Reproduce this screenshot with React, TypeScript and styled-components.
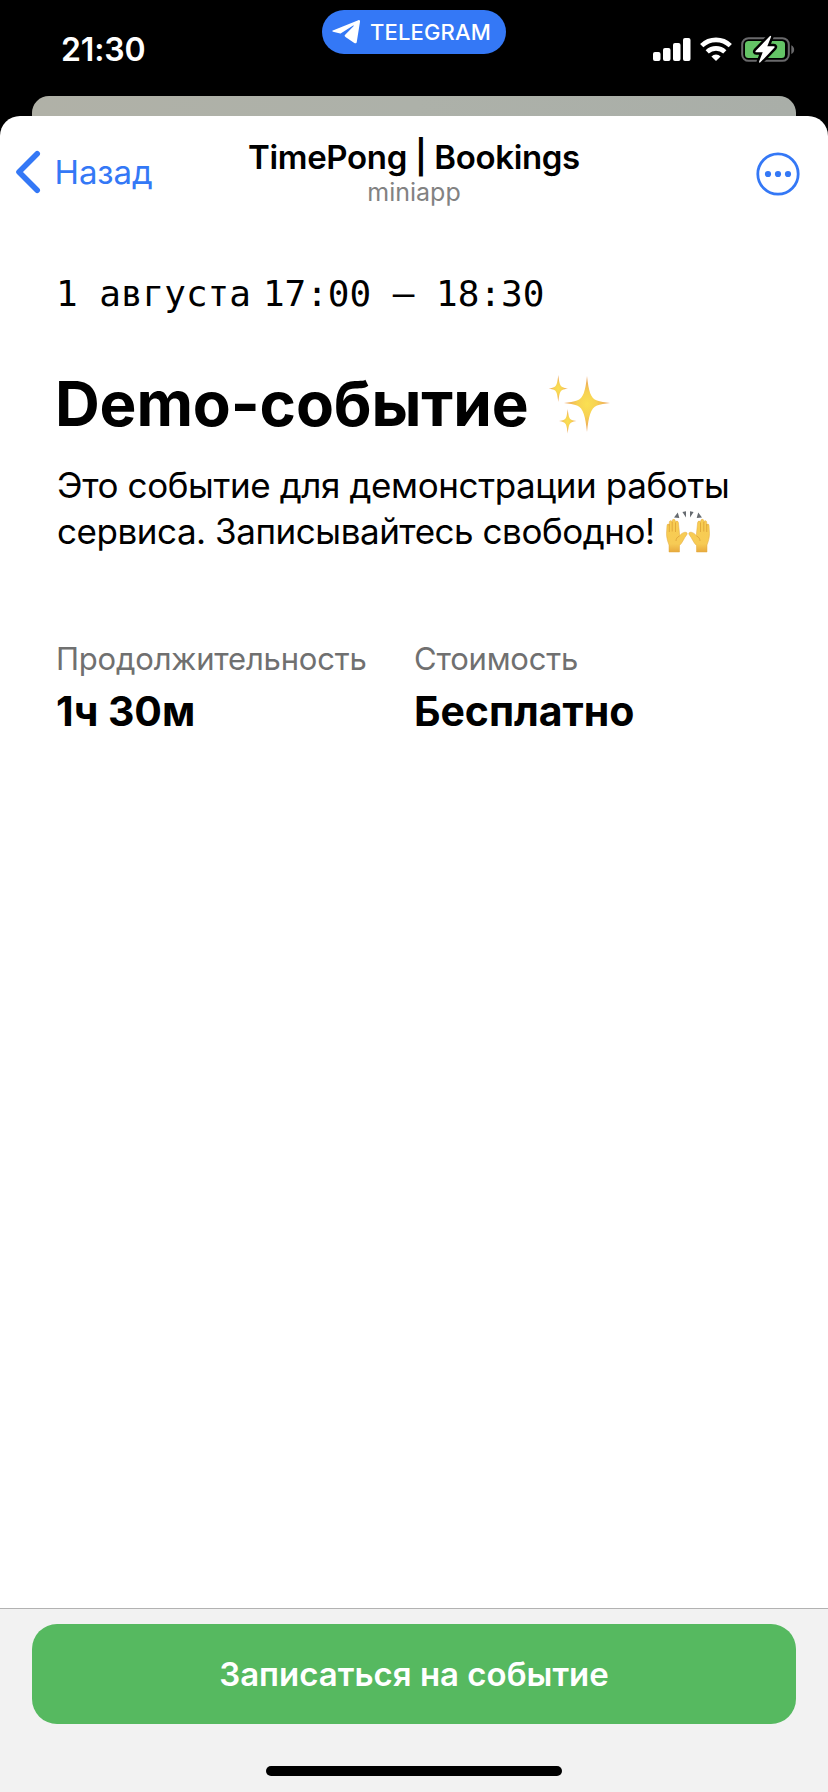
import React from "react";
import styled, { createGlobalStyle } from "styled-components";

const GlobalStyle = createGlobalStyle`
  * { box-sizing: border-box; }
  body {
    margin: 0;
    background: #000;
    color: #000;
    font-family: Inter, "Liberation Sans", sans-serif;
  }
`;

const BLUE = "#3478f6";

const Screen = styled.div`
  width: 828px;
  height: 1792px;
  display: flex;
  flex-direction: column;
  background: #000;
  overflow: hidden;
`;

const StatusBar = styled.header`
  height: 96px;
  flex: none;
  display: grid;
  grid-template-columns: 1fr 184px 1fr;
  align-items: start;
`;

const Clock = styled.time`
  padding: 30px 0 0 61px;
  color: #fff;
  font-size: 32px;
  line-height: 40px;
  font-weight: 600;
  letter-spacing: -0.15px;
`;

const AppPill = styled.div`
  margin-top: 10px;
  height: 44px;
  padding-left: 10px;
  display: flex;
  align-items: center;
  gap: 10px;
  border-radius: 22px;
  background: ${BLUE};
  color: #fff;
  font-size: 22px;
  line-height: 44px;
  font-weight: 500;
  letter-spacing: 0.15px;
`;

const StatusIcons = styled.div`
  display: flex;
  justify-content: flex-end;
  padding: 35px 32px 0 0;
`;

const BackSheet = styled.div`
  flex: none;
  height: 40px;
  margin: 0 32px -20px;
  border-radius: 17px 17px 0 0;
  background: linear-gradient(90deg, #b0b1a7, #adb1a9 50%, #a9aea8);
`;

const Sheet = styled.div`
  position: relative;
  flex: 1;
  display: flex;
  flex-direction: column;
  background: #fff;
  border-radius: 20px 20px 0 0;
  overflow: hidden;
`;

const NavBar = styled.nav`
  height: 112px;
  flex: none;
  display: grid;
  grid-template-columns: 1fr auto 1fr;
  align-items: center;
`;

const BackButton = styled.button`
  display: flex;
  align-items: center;
  justify-self: start;
  gap: 13.5px;
  padding: 0 0 0 15px;
  border: 0;
  background: none;
  color: ${BLUE};
  font: 400 33px/40px Inter, sans-serif;
  letter-spacing: -0.1px;
`;

const TitleBlock = styled.div`
  display: flex;
  flex-direction: column;
  align-items: center;
`;

const Title = styled.div`
  font-size: 33px;
  line-height: 40px;
  font-weight: 600;
  letter-spacing: -0.35px;
  white-space: nowrap;
`;

const Subtitle = styled.div`
  color: #828282;
  font-size: 25px;
  line-height: 30px;
`;

const MoreButton = styled.button`
  justify-self: end;
  display: flex;
  margin: 4px 28px 0 0;
  padding: 0;
  border: 0;
  background: none;
`;

const Content = styled.main`
  flex: 1;
  padding: 45px 56px 0;
`;

const DateRow = styled.div`
  display: flex;
  gap: 12px;
  font-family: "DejaVu Sans Mono", monospace;
  font-size: 36px;
  line-height: 42px;
  letter-spacing: -0.02px;
  white-space: pre;
`;

const Heading = styled.h1`
  display: flex;
  align-items: center;
  gap: 19px;
  margin: 51px 0 20px -1px;
  font-size: 62px;
  line-height: 76px;
  font-weight: 700;
  letter-spacing: -0.15px;
  white-space: nowrap;
`;

const Description = styled.p`
  margin: 0 0 86px 1px;
  font-size: 35px;
  line-height: 46px;
`;

const Line = styled.span<{ $tracking: number }>`
  display: block;
  letter-spacing: ${(p) => p.$tracking}px;
  white-space: nowrap;
`;

const Facts = styled.dl`
  display: grid;
  grid-template-columns: 358px 358px;
  margin: 0;
`;

const Label = styled.dt`
  color: #707070;
  font-size: 31px;
  line-height: 38px;
  letter-spacing: -0.2px;
`;

const Value = styled.dd`
  margin: 8px 0 0;
  font-size: 41px;
  line-height: 50px;
  font-weight: 700;
  letter-spacing: -0.05px;
`;

const Footer = styled.footer`
  height: 184px;
  flex: none;
  display: flex;
  flex-direction: column;
  align-items: center;
  padding: 15px 32px 0;
  border-top: 1px solid #b2b2b2;
  background: #f2f2f2;
`;

const PrimaryButton = styled.button`
  width: 100%;
  height: 100px;
  border: 0;
  border-radius: 25px;
  background: #56b960;
  color: #fff;
  font: 600 33px/40px Inter, sans-serif;
`;

const HomeIndicator = styled.div`
  width: 296px;
  height: 10px;
  margin-top: 42px;
  border-radius: 5px;
  background: #000;
`;

const HandsSvg = styled.svg`
  margin-left: 2px;
  vertical-align: -9px;
`;

const PlaneIcon = () => (
  <svg width="28" height="24" viewBox="0 0 28 24" fill="#fff">
    <path d="M.8 10.500 26.300.2c1.100-.4 1.900.2 1.700 1.500l-3.200 20c-.2 1.500-1.200 1.900-2.500 1.200l-8.800-5.800c-1.300-.9-1.100-1.600-.1-2.700l8.100-8.200c.7-.8.1-1.100-.7-.5L9.400 12.900c-.7.5-1.400.6-2.200.4L1 11.700c-1-.3-1-.8-.2-1.200Z" />
  </svg>
);

const SystemIcons = () => (
  <svg width="143" height="30" viewBox="0 0 143 30">
    <g fill="#fff">
      <rect x="0" y="17" width="7.5" height="9" rx="2" />
      <rect x="10" y="13" width="7.5" height="13" rx="2" />
      <rect x="20" y="8" width="7.5" height="18" rx="2" />
      <rect x="30" y="3" width="7.5" height="23" rx="2" />
      <path d="M63 26 58.4 21.4a6.7 6.7 0 0 1 9.2 0Z" />
    </g>
    <g fill="none" stroke="#fff" strokeWidth="4.6">
      <path d="M48.7 10.7a20.5 20.5 0 0 1 28.6 0" />
      <path d="M54.2 16.9a12.8 12.8 0 0 1 17.6 0" />
    </g>
    <rect x="89.2" y="3.2" width="46.6" height="22.6" rx="6.4" fill="none" stroke="#69696b" strokeWidth="2" />
    <path d="M138.3 10.2c3.8 1.8 3.8 7 0 8.8Z" fill="#69696b" />
    <rect x="92" y="6" width="40" height="17" rx="3.5" fill="#64c466" />
    <path d="M116.7 1.3 102.8 15.8q-1.1 1.4.6 1.5h6.3l-3.5 9c-.5 1.5.5 1.8 1.4.8l13.7-14.4q1.1-1.4-.6-1.5h-6.4l3.7-9.1c.5-1.4-.5-1.7-1.3-.8Z" fill="#fff" stroke="#000" strokeWidth="5" paintOrder="stroke" strokeLinejoin="round" />
  </svg>
);

const Sparkles = () => (
  <svg width="64" height="60" viewBox="0 0 64 60">
    <defs>
      <radialGradient id="spark">
        <stop offset="0" stopColor="#fae052" />
        <stop offset=".42" stopColor="#f7d253" />
        <stop offset=".75" stopColor="#efb256" />
        <stop offset="1" stopColor="#eca566" />
      </radialGradient>
    </defs>
    <g fill="url(#spark)">
      <path d="M39 2c1.700 15 3.600 22.500 10 24.600C52 27.800 57 28.500 62 29c-5 .6-10 1.300-13 2.600C42.500 34 40.700 43 39 58c-1.700-15-3.500-24-10-26.400C26 30.300 21 29.600 16 29c5-.5 10-1.200 13-2.400C35.400 24.500 37.300 17 39 2Z" />
      <path d="M10.300 1c.9 7.800 1.700 10.800 4 11.900 1.500.8 3.200 1.200 5.700 1.600-2.500.4-4.200.8-5.700 1.600-2.300 1.300-3.100 4.100-4 11.900-.9-7.800-1.700-10.600-4-11.900C4.800 15.300 3.100 14.900.6 14.500c2.500-.4 4.200-.8 5.700-1.600 2.300-1.100 3.100-4.100 4-11.900Z" />
      <path d="M19.700 35c.8 7.200 1.500 9.800 3.700 10.800 1.400.7 2.900 1 5 1.300-2.100.4-3.600.7-5 1.400-2.200 1.200-2.900 3.800-3.700 11-.8-7.200-1.500-9.800-3.700-11-1.400-.7-2.900-1-5-1.400 2.100-.3 3.600-.6 5-1.300 2.200-1 2.900-3.600 3.700-10.800Z" />
    </g>
  </svg>
);

const HAND =
  "M3 42V35C1.500 31 .5 27.500.5 23.500L1 15.500C1.200 13.600 3 13.600 3.200 15.500L3.300 12.200C3.500 10.200 5.800 10.200 6 12.200L6.200 10.700C6.400 8.900 9 8.900 9.200 10.700L9.600 12.200C10 10.500 12.200 10.800 12.400 12.700L13.700 25.500C15 24 16.800 22.500 19 22.200 21 22 21.800 23.500 20.600 24.900 18 28 16.500 33 13.500 35.500V42Z";

const RaisedHand = () => (
  <>
    <path d={HAND} fill="url(#skin)" stroke="#e3a93e" strokeWidth=".5" />
    <path d="M3.300 14v8M6.200 12v9.500M9.500 12.500V22M13.500 26c-2.500 1-3.500 3-3.500 5" fill="none" stroke="#d99b34" strokeWidth=".7" />
  </>
);

const RaisedHands = () => (
  <HandsSvg width="44" height="43" viewBox="0 0 44 43">
    <defs>
      <linearGradient id="skin" x1="0" y1="0" x2="0" y2="1">
        <stop offset="0" stopColor="#f8cd51" />
        <stop offset=".75" stopColor="#f7cb55" />
        <stop offset="1" stopColor="#e8aa3e" />
      </linearGradient>
    </defs>
    <RaisedHand />
    <g transform="matrix(-1 0 0 1 44 0)">
      <RaisedHand />
    </g>
    <path d="M11.800 2.500 13.300 8 8 7.500ZM20 1.200V7.500L16.400 2ZM24 1.200V7.500L27.600 2ZM32.200 2.500 30.700 8 36 7.500Z" fill="#666b70" />
  </HandsSvg>
);

export default function App() {
  return (
    <>
      <GlobalStyle />
      <Screen>
        <StatusBar>
          <Clock>21:30</Clock>
          <AppPill>
            <PlaneIcon />
            TELEGRAM
          </AppPill>
          <StatusIcons>
            <SystemIcons />
          </StatusIcons>
        </StatusBar>
        <BackSheet />
        <Sheet>
          <NavBar>
            <BackButton>
              <svg width="26" height="44" viewBox="0 0 26 44" fill="none" stroke={BLUE} strokeWidth="5.6" strokeLinecap="round" strokeLinejoin="round">
                <path d="M22.200 3.800 4 22l18.200 18.200" />
              </svg>
              Назад
            </BackButton>
            <TitleBlock>
              <Title>TimePong | Bookings</Title>
              <Subtitle>miniapp</Subtitle>
            </TitleBlock>
            <MoreButton aria-label="Меню">
              <svg width="44" height="44" viewBox="0 0 44 44" fill={BLUE}>
                <circle cx="22" cy="22" r="20.200" fill="none" stroke={BLUE} strokeWidth="2.8" />
                <circle cx="12" cy="22" r="3.1" />
                <circle cx="22" cy="22" r="3.1" />
                <circle cx="32" cy="22" r="3.1" />
              </svg>
            </MoreButton>
          </NavBar>
          <Content>
            <DateRow>
              <span>1 августа</span>
              <span>17:00 – 18:30</span>
            </DateRow>
            <Heading>
              Demo-событие
              <Sparkles />
            </Heading>
            <Description>
              <Line $tracking={-0.39}>Это событие для демонстрации работы</Line>
              <Line $tracking={-0.46}>
                сервиса. Записывайтесь свободно! <RaisedHands />
              </Line>
            </Description>
            <Facts>
              <div>
                <Label>Продолжительность</Label>
                <Value>1ч 30м</Value>
              </div>
              <div>
                <Label>Стоимость</Label>
                <Value>Бесплатно</Value>
              </div>
            </Facts>
          </Content>
          <Footer>
            <PrimaryButton>Записаться на событие</PrimaryButton>
            <HomeIndicator />
          </Footer>
        </Sheet>
      </Screen>
    </>
  );
}
